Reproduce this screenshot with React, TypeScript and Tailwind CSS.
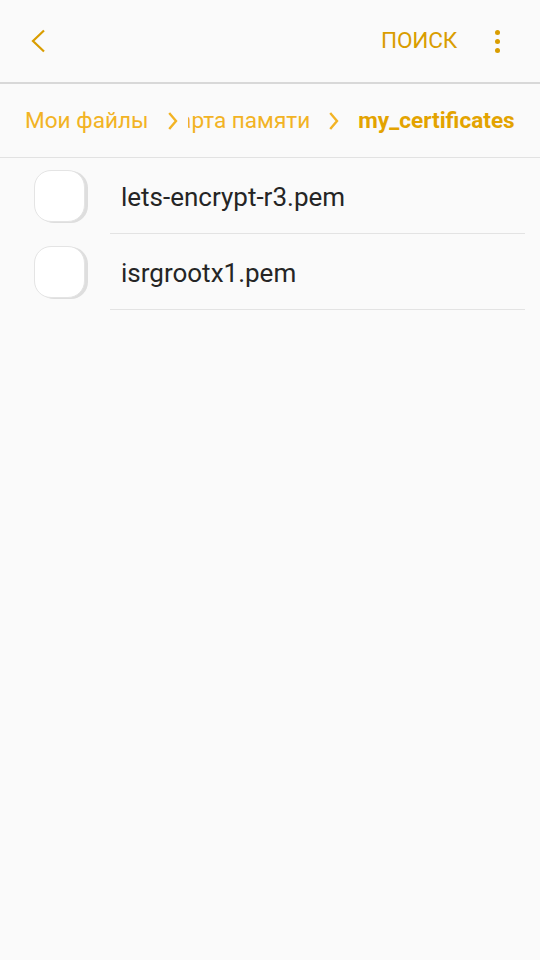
import { useState } from 'react';

const files = ['lets-encrypt-r3.pem', 'isrgrootx1.pem'];

function Chevron({ className }: { className?: string }) {
  return (
    <svg viewBox="0 0 10 18" className={className} fill="none" stroke="currentColor" strokeWidth="2.4" strokeLinecap="square">
      <path d="M2 2l6 7-6 7" />
    </svg>
  );
}

function Check({ on, onClick }: { on: boolean; onClick: () => void }) {
  return (
    <button
      type="button"
      onClick={onClick}
      className={`w-[51px] h-[52px] rounded-[17px] border border-[#e4e4e4] shadow-[3px_1px_0_0_#dedede] ${
        on ? 'bg-[#f0b020]' : 'bg-white'
      }`}
    />
  );
}

export default function App() {
  const [sel, setSel] = useState<string[]>([]);

  const toggle = (f: string) =>
    setSel((s) => (s.includes(f) ? s.filter((x) => x !== f) : [...s, f]));

  return (
    <div className="min-h-[960px] w-full bg-[#fafafa] font-['Roboto','Noto_Sans',sans-serif]">
      <header className="h-[82px] flex items-center pl-[31px] pr-[40px]">
        <svg viewBox="0 0 14 24" className="w-[14px] h-[24px] text-[#d99d00]" fill="none" stroke="currentColor" strokeWidth="2.2">
          <path d="M13 1.5L2 12l11 10.5" />
        </svg>
        <div className="flex-1" />
        <span className="text-[22.6px] text-[#d99d00] tracking-[-0.2px]">ПОИСК</span>
        <div className="ml-[38px] flex flex-col items-center gap-[4px]">
          <span className="w-[5px] h-[5px] rounded-full bg-[#d99d00]" />
          <span className="w-[5px] h-[5px] rounded-full bg-[#d99d00]" />
          <span className="w-[5px] h-[5px] rounded-full bg-[#d99d00]" />
        </div>
      </header>
      <div className="h-[2px] bg-[#d8d8d8]" />

      <nav className="h-[74px] flex items-center pl-[25px] text-[22.6px] text-[#f2b324] border-b border-[#e2e2e2] whitespace-nowrap">
        <span>Мои файлы</span>
        <Chevron className="ml-[19px] w-[10px] h-[18px] shrink-0" />
        <span className="ml-[10px] overflow-hidden shrink-0">
          <span className="block -ml-[23px]">Карта памяти</span>
        </span>
        <Chevron className="ml-[19px] w-[10px] h-[18px] shrink-0" />
        <span className="ml-[19px] font-bold text-[#e3a300]">my_certificates</span>
      </nav>

      <ul>
        {files.map((f) => (
          <li key={f} className="h-[76px] flex items-center">
            <div className="w-[110px] pl-[34px] flex items-center">
              <Check on={sel.includes(f)} onClick={() => toggle(f)} />
            </div>
            <div className="flex-1 h-full mr-[15px] flex items-center pl-[11px] pt-[4px] border-b border-[#e3e3e3]">
              <span className="text-[26px] text-[#252525]">{f}</span>
            </div>
          </li>
        ))}
      </ul>
    </div>
  );
}
